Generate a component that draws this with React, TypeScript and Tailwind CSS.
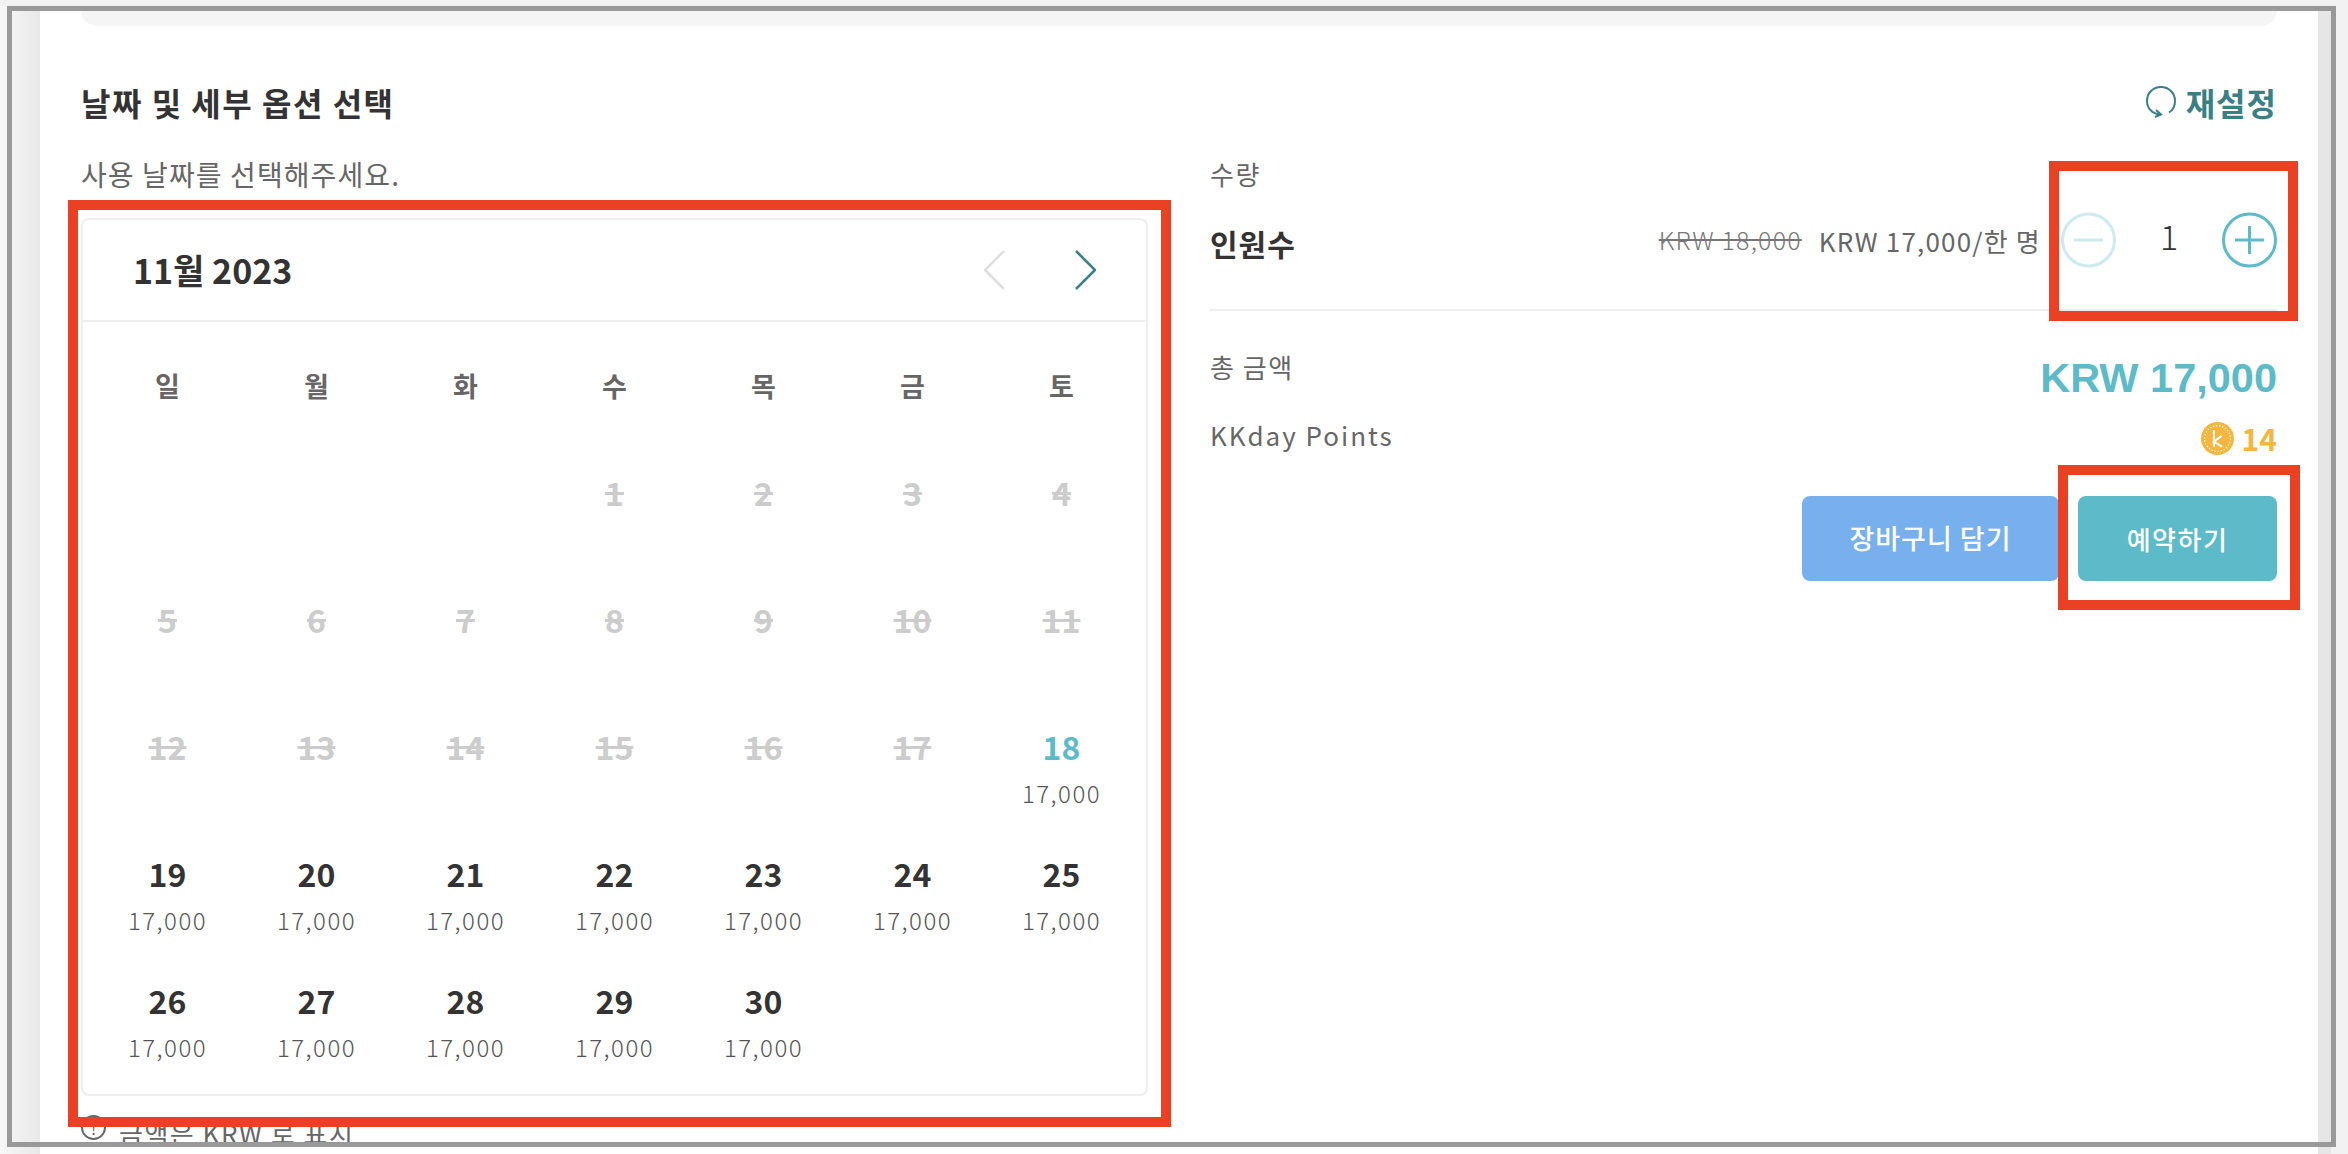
const FONT = "font-['Noto_Sans_CJK_KR','Noto_Sans',sans-serif]";

const weekdays = ['일', '월', '화', '수', '목', '금', '토'];

type Day = { n: number; state: 'off' | 'first' | 'on' } | null;

const days: Day[] = [null, null, null];
for (let n = 1; n <= 30; n++) {
	days.push({ n, state: n < 18 ? 'off' : n === 18 ? 'first' : 'on' });
}

const DayCell = ({ day }: { day: Day }) => {
	if (!day) return <div className="h-[127px]" />;
	return (
		<div className="h-[127px] flex flex-col items-center">
			<span
				className={
					'text-[32px] leading-[32px] font-bold ' +
					(day.state === 'off'
						? 'text-[#cccccc] line-through'
						: day.state === 'first'
							? 'text-[#5dbac8]'
							: 'text-[#333333]')
				}>
				{day.n}
			</span>
			{day.state !== 'off' && (
				<span className="mt-[15px] text-[24px] leading-[32px] tracking-[1.5px] font-light text-[#555555]">
					17,000
				</span>
			)}
		</div>
	);
};

const Calendar = () => (
	<div className="mt-[24px] h-[878px] rounded-lg border-2 border-[#eeeeee]">
		<div className="h-[102px] border-b-2 border-[#eeeeee] flex items-center justify-between pl-[50px] pr-[50px]">
			<span className="mb-[2px] text-[34px] font-bold text-[#333333]">11월 2023</span>
			<div className="flex items-center gap-[70px]">
				<svg width="21" height="40" viewBox="0 0 21 40" fill="none">
					<path d="M20 1 1 20l19 19" stroke="#dedede" strokeWidth="2.5" />
				</svg>
				<svg width="21" height="40" viewBox="0 0 21 40" fill="none">
					<path d="m1 1 19 19L1 39" stroke="#3a7f85" strokeWidth="2.5" />
				</svg>
			</div>
		</div>
		<div className="px-[10px]">
			<div className="grid grid-cols-7 h-[127px] pt-[44px]">
				{weekdays.map((w) => (
					<span
						key={w}
						className="text-center text-[27px] leading-[40px] font-bold text-[#666666]">
						{w}
					</span>
				))}
			</div>
			<div className="grid grid-cols-7 pt-[27px]">
				{days.map((d, i) => (
					<DayCell key={i} day={d} />
				))}
			</div>
		</div>
	</div>
);

const Stepper = () => (
	<div className="w-[216px] flex items-center justify-between">
		<svg width="55" height="56" viewBox="0 0 55 56" fill="none">
			<circle cx="27.5" cy="28" r="26" stroke="#cdeaef" strokeWidth="3" />
			<path d="M13 28h29" stroke="#cdeaef" strokeWidth="3" />
		</svg>
		<span className="text-[34px] leading-[40px] mb-[8px] font-light text-[#333333]">1</span>
		<svg width="55" height="56" viewBox="0 0 55 56" fill="none">
			<circle cx="27.5" cy="28" r="26" stroke="#5dbac8" strokeWidth="3" />
			<path d="M13 28h29M27.5 14v28" stroke="#5dbac8" strokeWidth="3" />
		</svg>
	</div>
);

const Coin = () => (
	<svg width="33" height="33" viewBox="0 0 32 32">
		<circle cx="16" cy="16" r="16" fill="#f4b63f" />
		<circle
			cx="16"
			cy="16"
			r="12.500"
			fill="none"
			stroke="#ffffff"
			strokeWidth="1"
			strokeDasharray="1.500 1.500"
		/>
		<path d="M12.500 8v16M20 13.500l-7.500 5.500 8 5" fill="none" stroke="#ffffff" strokeWidth="2" />
	</svg>
);

const ResetIcon = () => (
	<svg width="30" height="32" viewBox="0 0 30 32" fill="none">
		<path
			d="M23 26.500C27 24 29 20 29 15 29 7 23 1 15 1S1 7 1 15c0 7 5 13 13 13.500"
			stroke="#3a7f85"
			strokeWidth="2"
		/>
		<path d="M10 24l5 4.500-6 2.500" stroke="#3a7f85" strokeWidth="2" />
	</svg>
);

const RightPanel = () => (
	<div className="w-[1067px]">
		<div className="text-[26px] leading-[40px] tracking-[1.5px] text-[#666666]">수량</div>
		<div className="mt-[18px] h-[56px] flex items-center">
			<span className="mt-[6px] text-[30px] tracking-[1px] font-bold text-[#333333]">인원수</span>
			<span className="ml-auto text-[25px] tracking-[1.200px] font-light line-through text-[#777777]">
				KRW 18,000
			</span>
			<span className="ml-[17px] mr-[20px] text-[26px] tracking-[1.200px] text-[#666666]">
				KRW 17,000/한 명
			</span>
			<Stepper />
		</div>
		<div className="mt-[41px] h-[2px] bg-[#eeeeee]" />
		<div className="mt-[43px] h-[48px] flex items-center justify-between">
			<span className="mb-[22px] text-[26px] leading-[40px] tracking-[1.5px] text-[#666666]">총 금액</span>
			<span className="font-['Liberation_Sans',sans-serif] text-[41.5px] font-bold text-[#5dbac8]">
				KRW 17,000
			</span>
		</div>
		<div className="mt-[16px] h-[40px] flex items-center justify-between">
			<span className="mb-[6px] text-[26px] leading-[40px] tracking-[2px] text-[#666666]">KKday Points</span>
			<span className="flex items-center gap-[8px] text-[30px] font-bold text-[#f4b63f]">
				<Coin />
				14
			</span>
		</div>
		<div className="mt-[38px] flex justify-end gap-[19px]">
			<button className="w-[257px] h-[85px] rounded-lg bg-[#78b0ee] text-white text-[27px] tracking-[1px] font-medium">
				장바구니 담기
			</button>
			<button className="w-[199px] h-[85px] rounded-lg bg-[#5dbac8] text-white text-[26px] tracking-[1.5px] font-medium">
				예약하기
			</button>
		</div>
	</div>
);

const App = () => {
	return (
		<div className={`${FONT} relative w-[2348px] h-[1154px] overflow-hidden bg-white flex`}>
			<div className="w-[40px] shrink-0 bg-gradient-to-r from-[#f7f7f7] to-[#e8e8e8]" />
			<div className="w-[2278px] shrink-0 px-[41px]">
				<div className="h-[26px] rounded-b-2xl bg-[#f5f5f5]" />
				<div className="mt-[52px] h-[48px] flex items-center justify-between">
					<h2 className="text-[32px] tracking-[1.5px] font-bold text-[#333333]">날짜 및 세부 옵션 선택</h2>
					<span className="flex items-center gap-[10px] text-[32px] tracking-[1px] font-bold text-[#3a7f85]">
						<ResetIcon />
						재설정
					</span>
				</div>
				<div className="mt-[28px] flex justify-between">
					<div className="w-[1067px]">
						<div className="text-[28px] leading-[40px] tracking-[1.100px] text-[#666666]">
							사용 날짜를 선택해주세요.
						</div>
						<Calendar />
						<div className="mt-[19px] flex items-start gap-[13px] text-[26px] leading-[36px] tracking-[1.500px] text-[#666666]">
							<span className="w-[25px] h-[25px] rounded-full border-2 border-[#666666] flex items-center justify-center text-[16px] leading-none tracking-normal">
								!
							</span>
							금액은 KRW 로 표시
						</div>
					</div>
					<RightPanel />
				</div>
			</div>
			<div className="w-[13px] shrink-0 bg-[#e6e6e6]" />
			<div className="w-[17px] shrink-0 bg-[#f2f2f2]" />

			{/* annotation boxes and the screenshot frame sit on top of the page */}
			<div className="absolute left-[68px] top-[200px] w-[1103px] h-[927px] border-[10px] border-[#ea4024]" />
			<div className="absolute left-[2049px] top-[161px] w-[249px] h-[160px] border-[10px] border-[#ea4024]" />
			<div className="absolute left-[2058px] top-[465px] w-[242px] h-[145px] border-[10px] border-[#ea4024]" />
			<div className="absolute left-0 top-0 w-full h-[6px] bg-[#f2f2f2]" />
			<div className="absolute left-[7px] top-[6px] w-[2329px] h-[1141px] border-[5px] border-[#999999]" />
		</div>
	);
};

export default App;
